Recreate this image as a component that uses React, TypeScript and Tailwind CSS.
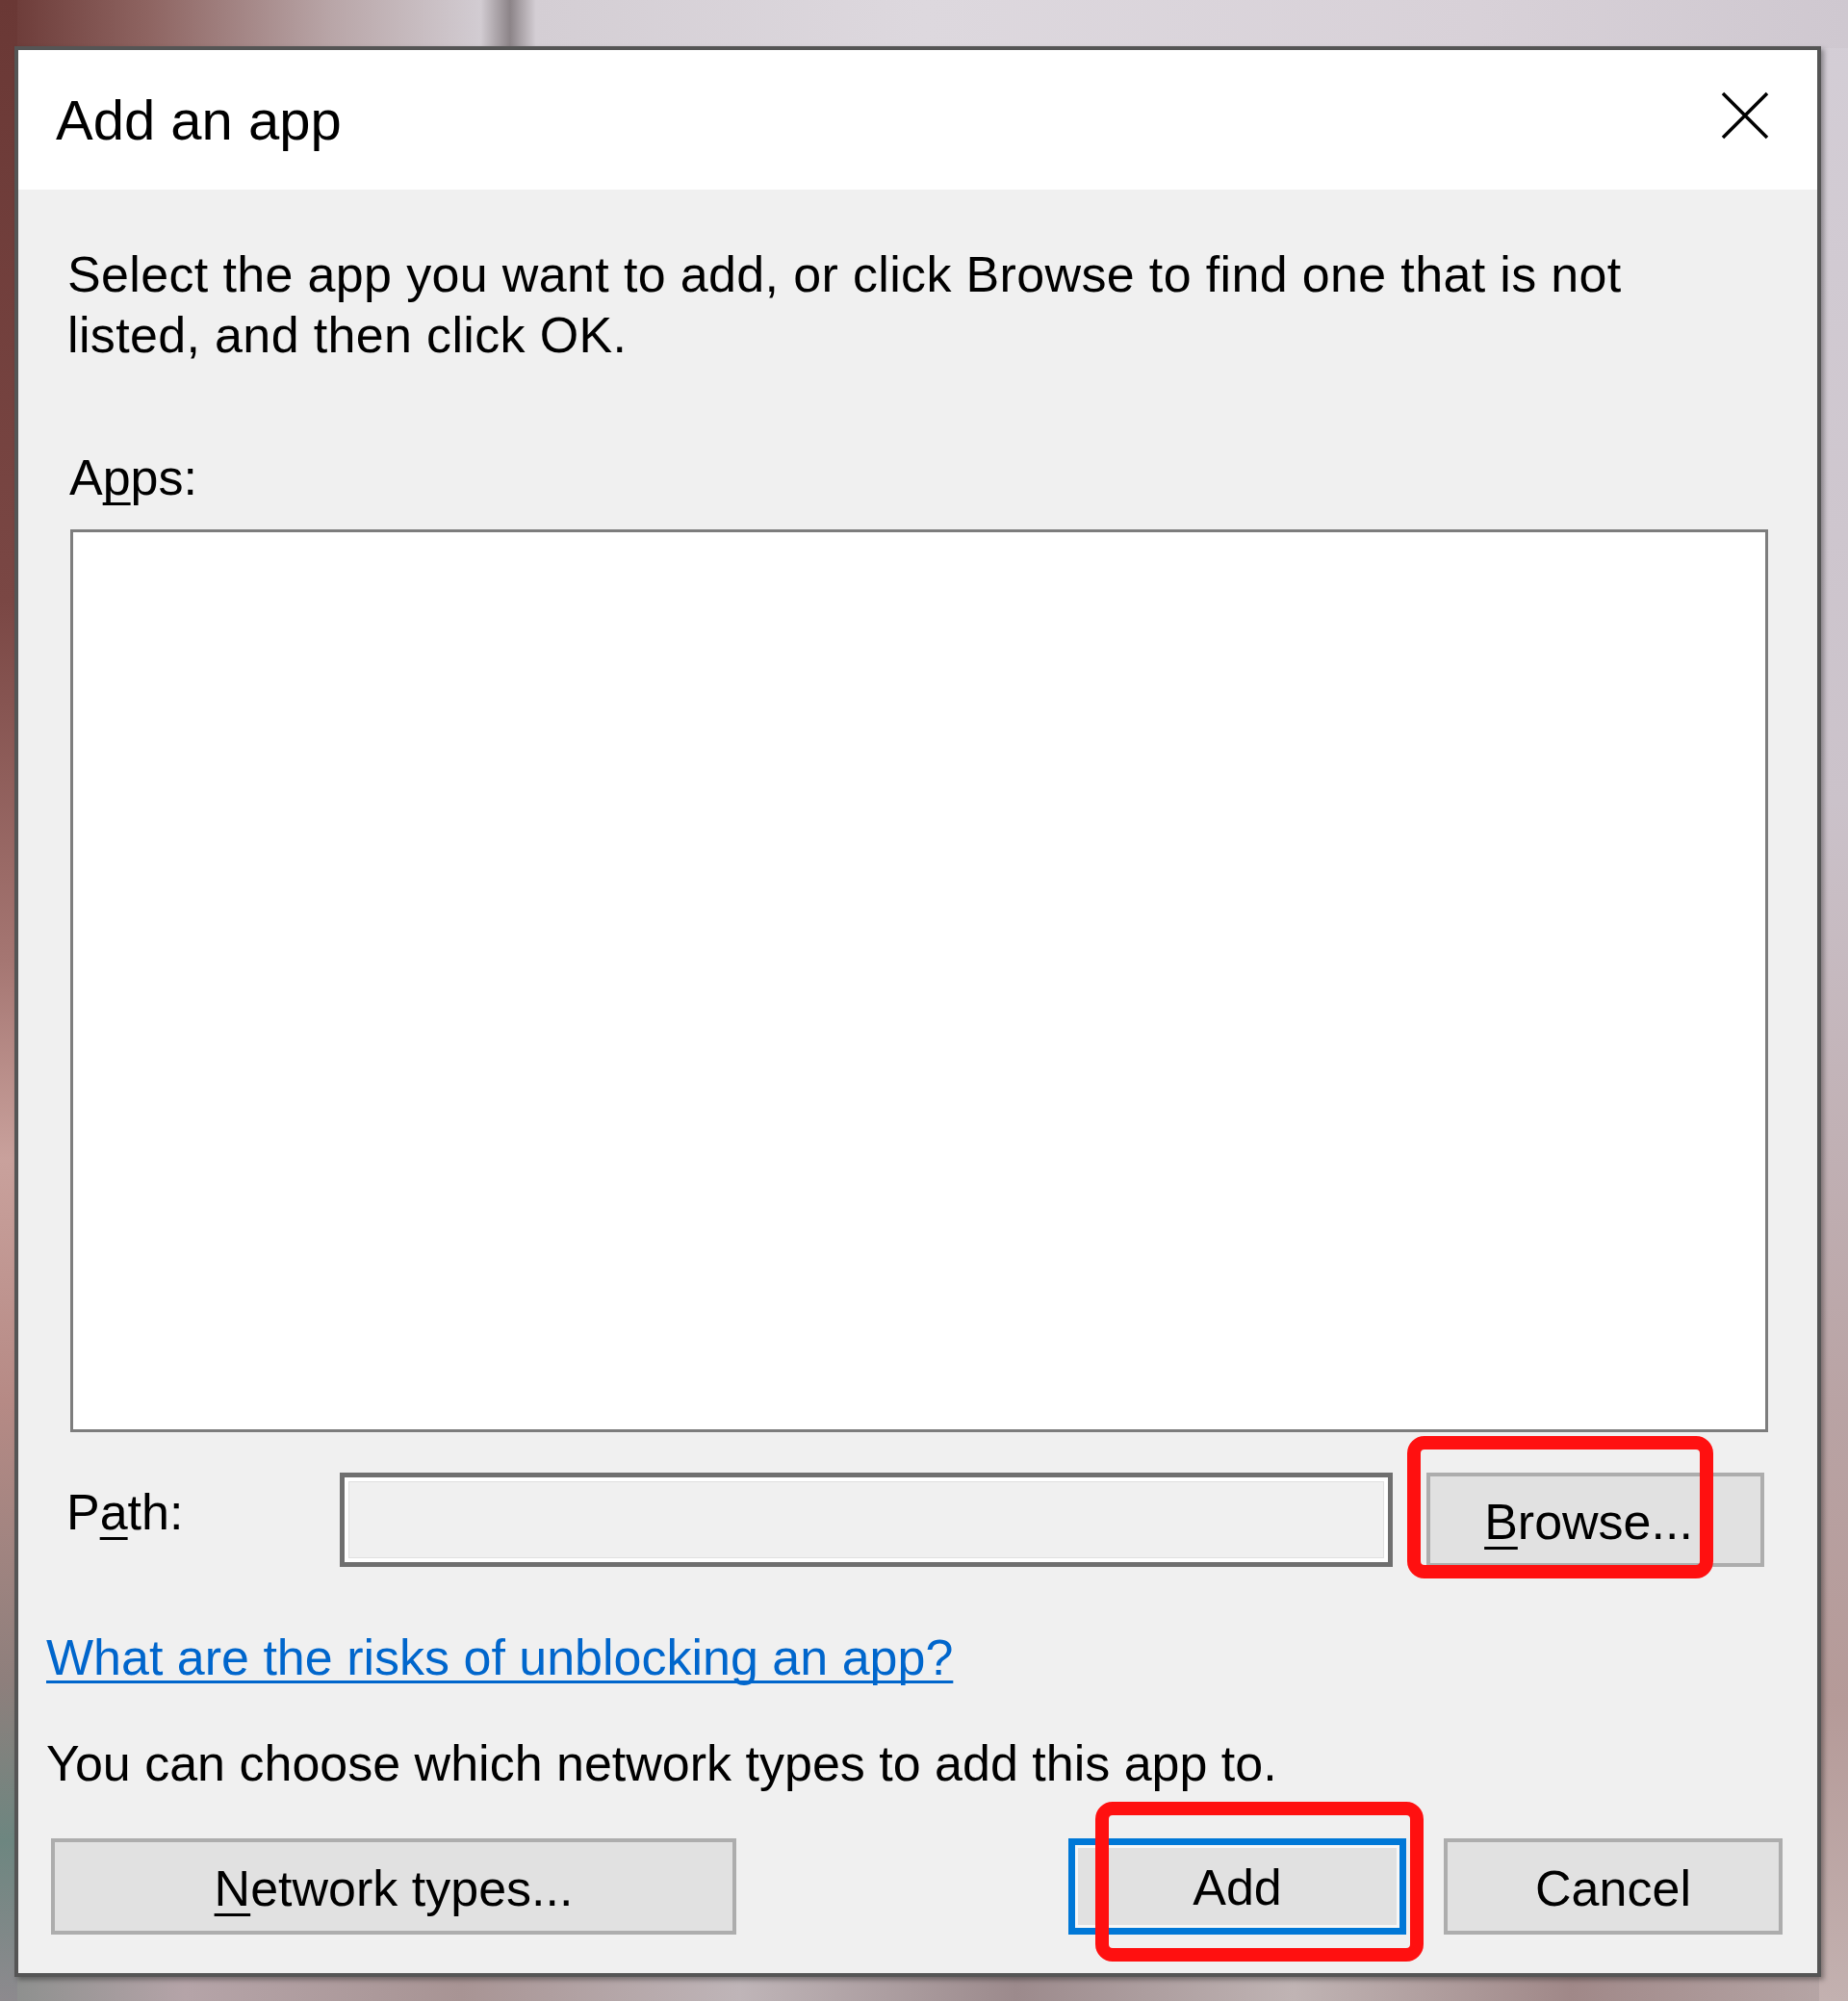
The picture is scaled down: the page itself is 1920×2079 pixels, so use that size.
import React from "react";

function Mn({ children }: { children: React.ReactNode }) {
  return (
    <span className="underline decoration-[3px] underline-offset-[8px] [text-decoration-skip-ink:none]">
      {children}
    </span>
  );
}

export default function App() {
  return (
    <div className="w-[1920px] h-[2079px] overflow-hidden pt-[48px] pl-[15px] font-['Liberation_Sans',Arial,sans-serif] text-black [background:linear-gradient(to_bottom,#6a3835_0%,#7a4744_30%,#a57672_48%,#c9a19c_58%,#b68a85_70%,#8e7f7c_84%,#6d8680_92%,#8d8a8e_100%)_left_top/18px_100%_no-repeat,linear-gradient(to_right,#6a3835_0%,#8e6461_8%,#b9a6a8_18%,#d2ccd2_26%,#8c8488_27.6%,#d4ced4_29%,#ddd8de_50%,#d8d1d8_80%,#cfc8d0_100%)_left_top/100%_50px_no-repeat,linear-gradient(to_bottom,#d4ced6_0%,#cbc2ca_40%,#b9a3a4_70%,#b59a98_85%,#c3b1b0_100%)_right_top/30px_100%_no-repeat,linear-gradient(to_right,#8a8e8c_0%,#b5a4a8_10%,#a89494_25%,#bfb5b8_40%,#9c8a8c_55%,#c0b4b4_70%,#a08888_85%,#b8a8a8_100%)_left_bottom/100%_30px_no-repeat,#cfc6cc]">
      <div className="w-[1877px] h-[2006px] border-[4px] border-[#555555] flex flex-col shadow-[3px_3px_5px_rgba(0,0,0,0.35)]">
        {/* Title bar */}
        <div className="h-[145px] shrink-0 bg-white flex items-start justify-between">
          <div className="ml-[39px] mt-[44px] text-[58px] leading-[58px]">Add an app</div>
          <svg
            className="mt-[43px] mr-[50px]"
            width="50"
            height="50"
            viewBox="0 0 50 50"
          >
            <path d="M2 2 L48 48 M48 2 L2 48" stroke="#000" strokeWidth="3.5" fill="none" />
          </svg>
        </div>

        {/* Body */}
        <div className="flex-1 bg-[#f0f0f0] flex flex-col text-[52px] leading-[63px]">
          <p className="mt-[57px] ml-[51px] tracking-[0.35px]">
            Select the app you want to add, or click Browse to find one that is not
            <br />
            listed, and then click OK.
          </p>

          <div className="mt-[85px] ml-[53px]">
            A<Mn>p</Mn>ps:
          </div>

          <div className="mt-[22px] ml-[54px] w-[1764px] h-[938px] border-[3px] border-[#7d7d7d] bg-white shrink-0" />

          <div className="mt-[42px] flex items-start h-[98px] shrink-0">
            <div className="ml-[50px] w-[284px] mt-[10px]">
              P<Mn>a</Mn>th:
            </div>
            <div className="w-[1094px] h-[98px] border-[5px] border-[#6f6f6f] bg-white p-[4px]">
              <div className="w-full h-full border border-[#e0e0e0] bg-[#f0f0f0]" />
            </div>
            <div className="relative ml-[35px] w-[351px] h-[98px] border-[4px] border-[#adadad] bg-[#e1e1e1] flex items-center justify-center pt-[4px]">
              <span className="-ml-[14px]">
                <Mn>B</Mn>rowse...
              </span>
              <div className="absolute left-[-24px] top-[-42px] w-[318px] h-[148px] border-[14px] border-[#ff1010] rounded-[18px]" />
            </div>
          </div>

          <div className="mt-[63px] ml-[29px]">
            <span className="text-[#0066cc] underline decoration-[3px] underline-offset-[6px] [text-decoration-skip-ink:none]">
              What are the risks of unblocking an app?
            </span>
          </div>

          <div className="mt-[47px] ml-[29px]">
            You can choose which network types to add this app to.
          </div>

          <div className="mt-[46px] flex h-[100px] shrink-0">
            <div className="ml-[34px] w-[712px] h-[100px] border-[4px] border-[#adadad] bg-[#e1e1e1] flex items-center justify-center pt-[4px]">
              <span>
                <Mn>N</Mn>etwork types...
              </span>
            </div>
            <div className="relative ml-auto w-[351px] h-[100px] border-[7px] border-[#0078d7]">
              <div className="w-full h-full border-[3px] border-[#f7f7f7] bg-[#e1e1e1] flex items-center justify-center pt-[2px]">
                <span>Add</span>
              </div>
              <div className="absolute left-[21px] top-[-45px] w-[341px] h-[166px] border-[14px] border-[#ff1010] rounded-[18px]" />
            </div>
            <div className="ml-[39px] mr-[36px] w-[352px] h-[100px] border-[4px] border-[#adadad] bg-[#e1e1e1] flex items-center justify-center pt-[4px]">
              <span>Cancel</span>
            </div>
          </div>
        </div>
      </div>
    </div>
  );
}
